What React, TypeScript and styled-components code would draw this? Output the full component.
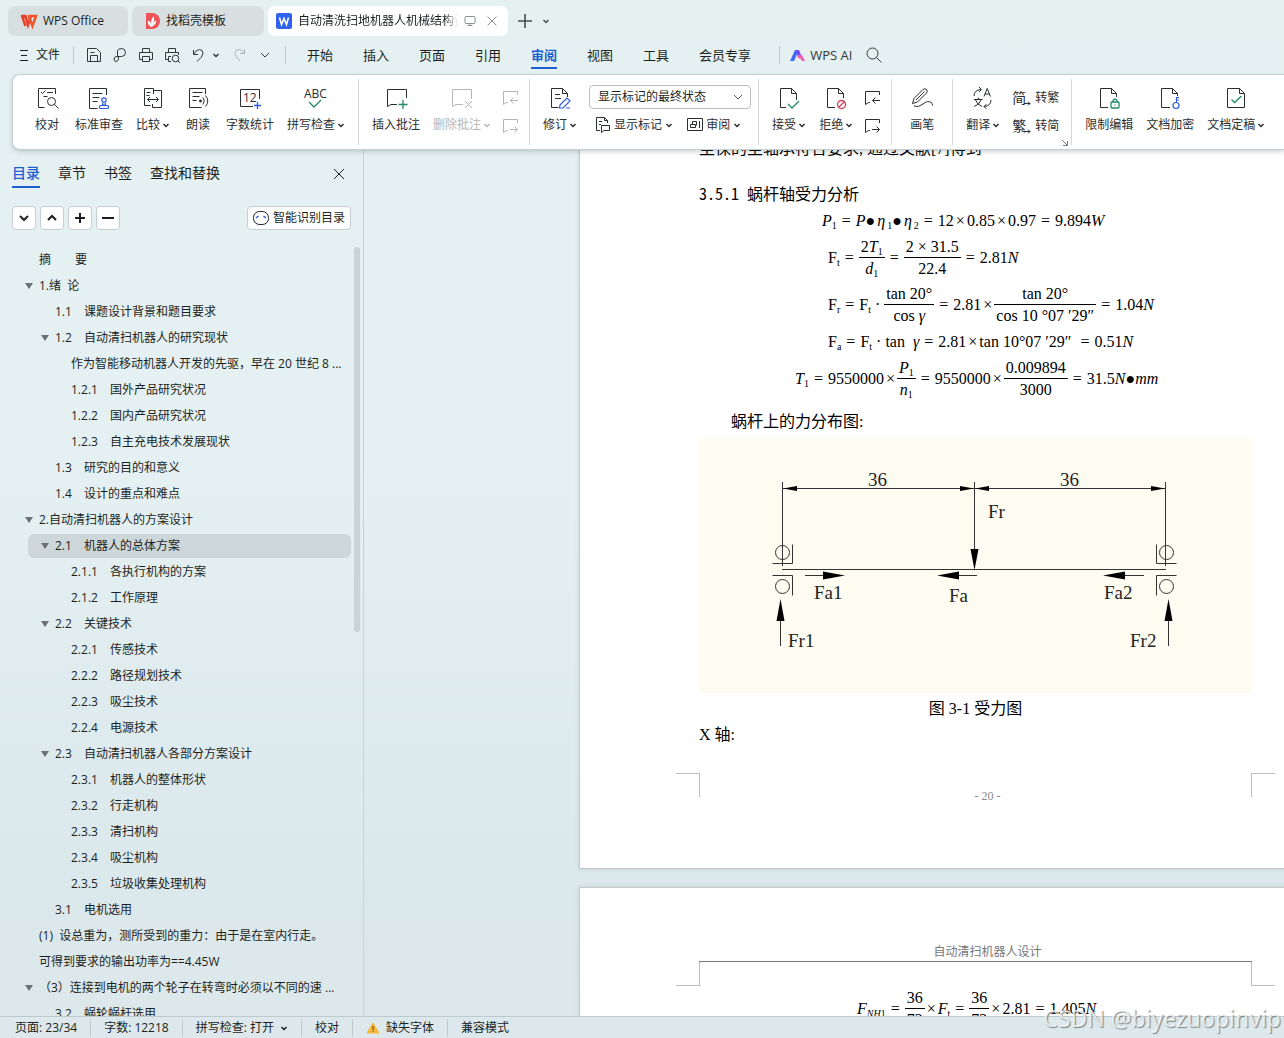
import React from "react";
import styled, { createGlobalStyle, css } from "styled-components";

const UI = '"Open Sans", "Noto Sans CJK SC", sans-serif';
const SERIF = '"Liberation Serif", "Noto Sans CJK SC", serif';
const INK = "#2b2e30";
const BLUE = "#1b5fd0";
const GREEN = "#1f8a63";
const LINE = "#c3cfd1";

const Global = createGlobalStyle`
  *, *::before, *::after { box-sizing: border-box; }
  body { margin: 0; overflow: hidden; }
  button, select { font: inherit; color: inherit; }
`;

const Shell = styled.div`
  position: relative;
  display: flex;
  flex-direction: column;
  height: 100vh;
  overflow: hidden;
  background: linear-gradient(180deg, #e5f0f1 0%, #e4f0f1 45%, #dbe8ec 85%, #dde8ea 100%);
  color: #1c1f21;
  font-family: ${UI};
  font-size: 12px;
  line-height: 18px;
`;

const PlainButton = styled.button`
  display: inline-flex;
  align-items: center;
  justify-content: center;
  padding: 0;
  border: 0;
  background: none;
  white-space: nowrap;
`;

const Glyph = styled.svg`
  display: block;
  flex: none;
  fill: none;
  stroke: currentColor;
  overflow: visible;
`;

type IconProps = { w?: number; h?: number; children: React.ReactNode; sw?: number };
const Icon = ({ w = 16, h = 16, sw = 1, children }: IconProps) => (
  <Glyph width={w} height={h} viewBox={`0 0 ${w} ${h}`} strokeWidth={sw} aria-hidden="true">
    {children}
  </Glyph>
);

const Caret = ({ bold = true }: { bold?: boolean }) => (
  <Icon w={8} h={8} sw={bold ? 1.5 : 1}>
    <path d="M1.5 3l2.5 2.5L6.5 3" />
  </Icon>
);

/* Window tabs */

const TabBar = styled.nav`
  display: flex;
  align-items: center;
  gap: 4px;
  padding: 6px 8px 0;
`;

const WindowTab = styled(PlainButton)<{ $w: number; $active?: boolean }>`
  justify-content: flex-start;
  gap: 6px;
  width: ${(p) => p.$w}px;
  height: 30px;
  padding: 0 12px;
  border-radius: 7px;
  background: ${(p) => (p.$active ? "#fff" : "#d7dfe1")};
  ${(p) => p.$active && css`padding: 0 10px 0 8px;`}
`;

const FadedTitle = styled.span`
  flex: 1;
  min-width: 0;
  overflow: hidden;
  text-align: left;
  mask-image: linear-gradient(90deg, #000 92%, transparent 100%);
`;

const TabTools = styled.span`
  display: flex;
  align-items: center;
  gap: 10px;
  color: #8b8f91;
`;

const NewTab = styled(PlainButton)`
  height: 30px;
  margin-left: 5px;
  color: #4a4d4f;
`;

/* Menu */

const MenuRow = styled.div`
  display: flex;
  align-items: center;
  height: 38px;
  flex: none;
  padding-left: 18px;
  color: #34383a;
`;

const FileButton = styled(PlainButton)`
  gap: 7px;
  width: 43px;
  color: #1c1f21;
`;

const Rule = styled.span<{ $gap?: number }>`
  width: 1px;
  height: 18px;
  margin: 0 ${(p) => p.$gap ?? 12}px;
  background: #bfcbcd;
`;

const QuickTools = styled.div`
  display: flex;
  align-items: center;
  gap: 10px;
`;

const UndoPair = styled.span`
  display: flex;
  align-items: center;
  gap: 8px;
  padding: 0 2px;
`;

const MenuTabs = styled.div`
  display: flex;
  gap: 30px;
  margin: 0 18px 0 8px;
  font-size: 13px;
`;

const MenuTab = styled(PlainButton)<{ $active?: boolean }>`
  height: 28px;
  padding-top: 2px;
  border-bottom: 2px solid ${(p) => (p.$active ? BLUE : "transparent")};
  color: ${(p) => (p.$active ? BLUE : "#1c1f21")};
  font-weight: ${(p) => (p.$active ? 700 : 400)};
`;

const AiButton = styled(PlainButton)`
  gap: 5px;
  margin-right: 14px;
  font-size: 13px;
`;

/* Ribbon */

const Ribbon = styled.div`
  position: relative;
  z-index: 2;
  display: flex;
  flex: none;
  margin-left: 12px;
  padding: 4px 0 4px 6px;
  border: 1px solid ${LINE};
  border-right: 0;
  border-radius: 8px 0 0 8px;
  background: #fff;
  box-shadow: 0 2px 4px rgba(70, 90, 95, 0.25);
`;

const Group = styled.div`
  position: relative;
  display: flex;
  gap: 1px;
  height: 66px;
  padding: 4px 7px 0;
  border-right: 1px solid #d3d7d8;
  &:last-child { border-right: 0; }
`;

const Tool = styled(PlainButton)<{ $off?: boolean; $min?: number }>`
  flex-direction: column;
  justify-content: flex-start;
  gap: 6px;
  height: 56px;
  min-width: ${(p) => p.$min ?? 42}px;
  padding: 3px 6px 0;
  color: ${(p) => (p.$off ? "#b3b5b6" : INK)};
`;

const ToolLabel = styled.span`
  display: flex;
  align-items: center;
  gap: 2px;
`;

const Stack = styled.div<{ $w: number; $pad?: number; $off?: boolean }>`
  display: flex;
  flex-direction: column;
  align-items: ${(p) => (p.$pad ? "stretch" : "center")};
  gap: 3px;
  width: ${(p) => p.$w + (p.$pad ?? 0)}px;
  padding: 2px 0 0 ${(p) => p.$pad ?? 0}px;
  color: ${(p) => (p.$off ? "#b3b5b6" : INK)};
`;

const SmallButton = styled(PlainButton)`
  justify-content: flex-start;
  gap: 3px;
  height: 25px;
`;

const SmallRow = styled.div`
  display: flex;
  gap: 14px;
  padding-left: 7px;
`;

const SelectBox = styled.label`
  display: grid;
  grid-template-columns: 1fr 24px;
  align-items: center;
  height: 24px;
  border: 1px solid #b9bdbf;
  border-radius: 4px;
  color: #55595b;
`;

const Select = styled.select`
  grid-area: 1 / 1 / 2 / 3;
  height: 22px;
  padding: 0 8px;
  border: 0;
  appearance: none;
  background: none;
  color: #1c1f21;
`;

const SelectArrow = styled.span`
  grid-area: 1 / 2;
  display: grid;
  place-items: center;
  pointer-events: none;
`;

const GlyphText = styled.span`
  display: flex;
  align-items: flex-end;
  font-size: 14px;
  font-weight: 400;
`;

const CornerMark = styled.span`
  position: absolute;
  right: 3px;
  bottom: -1px;
  color: #777;
`;

const icons = {
  proof: (
    <Icon w={24} h={24}>
      <path d="M20.500 8V2.500h-17v19h6M6 6l1.500 1.500 3-3M12 6.500h6M8.500 10.500h4" />
      <circle cx="16.500" cy="15.500" r="4" /><path d="M19.500 18.500l4 4" />
    </Icon>
  ),
  standard: (
    <Icon w={24} h={24}>
      <path d="M19.500 9V2.500h-17v20h8M5.500 7.500h10M5.500 11.500h7M5.500 15.500h5" />
      <g stroke="#2d5be0" strokeWidth="1.200"><circle cx="17" cy="14" r="2.200" /><path d="M16 16.500l-.5 2.500h3l-.5-2.500" /><rect x="12.500" y="19.500" width="9" height="3" rx="1" /></g>
    </Icon>
  ),
  compare: (
    <Icon w={24} h={24}>
      <path d="M12.500 8V2.500h-9v17h6M13 4.500h7.500v17h-9V18M5.500 6.500h4M5.500 9.500h3M6.500 13.500h11M9 11l-2.500 2.500L9 16M15 11l2.500 2.500L15 16" />
    </Icon>
  ),
  read: (
    <Icon w={24} h={24}>
      <path d="M19.500 8V2.500h-16v19h12M6.500 6.500h10M6.500 10.500h7M6.500 14.500h4M17 11.500q2.500 3.500 0 7M19.500 9.500q4.500 5.500 0 11" />
      <circle cx="14.500" cy="15" r="1" fill="currentColor" />
    </Icon>
  ),
  count: (
    <Icon w={24} h={24}>
      <path d="M21.500 13V3.500h-19v17H15" />
      <text x="5" y="16" fontSize="12" stroke="none" fill="currentColor" fontFamily="Open Sans">12</text>
      <path d="M19.500 16v7M16 19.500h7" stroke="#2d5be0" strokeWidth="1.300" />
    </Icon>
  ),
  spell: (
    <Icon w={24} h={24}>
      <text x="0" y="12" fontSize="12" stroke="none" fill="currentColor" fontFamily="Open Sans">ABC</text>
      <path d="M5 16l5 5 7-7" stroke={GREEN} strokeWidth="1.300" />
    </Icon>
  ),
  note: (
    <Icon w={24} h={24}>
      <path d="M22.500 12V3.500h-19v17l3.500-2h6" /><path d="M19 14v9M14.500 18.500h9" stroke={GREEN} strokeWidth="1.300" />
    </Icon>
  ),
  noteDel: (
    <Icon w={24} h={24}>
      <path d="M21.500 13V3.500h-19v17l3.500-2h7M15 15l7 7M22 15l-7 7" />
    </Icon>
  ),
  revise: (
    <Icon w={24} h={24}>
      <path d="M19.500 11V7.500l-5-5h-11v19h7M14.500 2.500v5h5M7 8.500h5M7 12.500h6" />
      <path d="M12 19l7-7 3 3-7 7h-3.500zM18 22h4" stroke="#2d5be0" strokeWidth="1.200" />
    </Icon>
  ),
  accept: (
    <Icon w={24} h={24}>
      <path d="M9 21.500H3.500v-19h11l5 5V14M14.500 2.500v5h5" /><path d="M11 18l4 4 7-7" stroke={GREEN} strokeWidth="1.300" />
    </Icon>
  ),
  reject: (
    <Icon w={24} h={24}>
      <path d="M11 21.500H3.500v-19h11l5 5V12M14.500 2.500v5h5" />
      <g stroke="#d03a5a" strokeWidth="1.300"><circle cx="17.500" cy="18.500" r="4" /><path d="M14.500 21.500l6-6" /></g>
    </Icon>
  ),
  pen: (
    <Icon w={24} h={24}>
      <path d="M2.500 17.500l1.500-5L13 3.500q2-1.500 3.500 0t0 3.500L7.500 16zM6 14l8.500-8.500M4 20q4 2 9-2t8-1.500q1.500.5 1.500 3" />
    </Icon>
  ),
  translate: (
    <Icon w={24} h={24}>
      <path d="M3 10q0-6 7-6.500M8 1l2.500 2.500L8 6M20 14q0 6-7 6.500M15.500 18L13 20.500l2.500 2.500M13 10.500l3.200-8 3.200 8M14 8h4.500M3 13.500h8.500M7.200 11.500v2M4.500 14q2 5 6.500 6.500M10 14q-1.500 5-7 6.500" />
    </Icon>
  ),
  lock: (
    <Icon w={24} h={24}>
      <path d="M11 21.500H3.500v-19h11l5 5V11M14.500 2.500v5h5" />
      <g stroke={GREEN} strokeWidth="1.300"><rect x="14" y="16" width="8" height="6" rx="1" /><path d="M16 16v-1.500q2-3 4 0V16M18 18.500v1" /></g>
    </Icon>
  ),
  key: (
    <Icon w={24} h={24}>
      <path d="M12 21.500H3.500v-19h11l5 5V10M14.500 2.500v5h5" />
      <g stroke="#2d5be0" strokeWidth="1.200"><circle cx="18" cy="19.500" r="3" /><path d="M18.500 16.500v-5H21M18.500 14H21" /></g>
    </Icon>
  ),
  final: (
    <Icon w={24} h={24}>
      <path d="M3.500 2.500h12l5 5v14h-17zM15.500 2.500v5h5" /><path d="M7.500 13.500l3 3 7-6.500" stroke={GREEN} strokeWidth="1.300" />
    </Icon>
  ),
};

const PrevNote = () => (
  <Icon w={18} h={18}><path d="M16.500 6V2.500h-14v13l3-2H7M17 11.500H9.500M12.500 8.500l-3 3 3 3" /></Icon>
);
const NextNote = () => (
  <Icon w={18} h={18}><path d="M16.500 6V2.500h-14v13l3-2H7M9 12.500h7.500M13.500 9.500l3 3-3 3" /></Icon>
);
const Turn = () => (
  <Icon w={6} h={8}><path d="M-2 4.500h6M2 2.500l2 2-2 2" /></Icon>
);

type ToolProps = { icon: React.ReactNode; label: string; arrow?: boolean; off?: boolean; min?: number };
const BigTool = ({ icon, label, arrow, off, min }: ToolProps) => (
  <Tool $off={off} $min={min} disabled={off}>
    {icon}
    <ToolLabel>{label}{arrow && <Caret />}</ToolLabel>
  </Tool>
);

/* Body */

const Body = styled.div`
  display: flex;
  flex: 1;
  min-height: 0;
`;

const Sidebar = styled.aside`
  display: flex;
  flex: 0 0 364px;
  flex-direction: column;
  min-height: 0;
  border-right: 1px solid #cdd2d4;
`;

const SideTabs = styled.div`
  display: flex;
  gap: 18px;
  padding: 10px 18px 0 12px;
  font-size: 14px;
  & > :last-child { margin-left: auto; }
`;

const SideTab = styled(PlainButton)<{ $active?: boolean }>`
  height: 28px;
  border-bottom: 2px solid ${(p) => (p.$active ? BLUE : "transparent")};
  color: ${(p) => (p.$active ? BLUE : "#1c1f21")};
  font-weight: ${(p) => (p.$active ? 500 : 400)};
`;

const SideTools = styled.div`
  display: flex;
  gap: 4px;
  padding: 18px 12px 16px;
  & > :last-child { margin-left: auto; }
`;

const Chip = styled(PlainButton)<{ $wide?: boolean }>`
  gap: 4px;
  width: ${(p) => (p.$wide ? 104 : 24)}px;
  height: 24px;
  border: 1px solid #c5ced0;
  border-radius: 4px;
  background: #fff;
`;

const OutlineArea = styled.div`
  display: flex;
  flex: 1;
  min-height: 0;
  overflow: hidden;
  padding-right: 3px;
`;

const Outline = styled.ul`
  flex: 1;
  min-width: 0;
  margin: 0;
  padding: 2px 3px 0 28px;
  list-style: none;
`;

const OutlineRow = styled.li<{ $level: number; $active?: boolean }>`
  display: flex;
  align-items: center;
  height: 24px;
  margin-bottom: 2px;
  padding-left: ${(p) => p.$level * 16}px;
  border-radius: 6px;
  background: ${(p) => (p.$active ? "#cdd6d8" : "transparent")};
  white-space: pre;
`;

const Twist = styled.span`
  flex: 0 0 14px;
  margin-left: -3px;
  svg { fill: #6c7173; stroke: none; }
`;

const Thumb = styled.div`
  width: 6px;
  height: 50%;
  margin-top: 1px;
  border-radius: 3px;
  background: #cad3d5;
`;

const outline: [number, string, boolean?][] = [
  [0, "摘　　要"], [0, "1.绪  论", true], [1, "1.1　课题设计背景和题目要求"],
  [1, "1.2　自动清扫机器人的研究现状", true], [2, "作为智能移动机器人开发的先驱，早在 20 世纪 8 ..."],
  [2, "1.2.1　国外产品研究状况"], [2, "1.2.2　国内产品研究状况"], [2, "1.2.3　自主充电技术发展现状"],
  [1, "1.3　研究的目的和意义"], [1, "1.4　设计的重点和难点"], [0, "2.自动清扫机器人的方案设计", true],
  [1, "2.1　机器人的总体方案", true], [2, "2.1.1　各执行机构的方案"], [2, "2.1.2　工作原理"],
  [1, "2.2　关键技术", true], [2, "2.2.1　传感技术"], [2, "2.2.2　路径规划技术"],
  [2, "2.2.3　吸尘技术"], [2, "2.2.4　电源技术"], [1, "2.3　自动清扫机器人各部分方案设计", true],
  [2, "2.3.1　机器人的整体形状"], [2, "2.3.2　行走机构"], [2, "2.3.3　清扫机构"],
  [2, "2.3.4　吸尘机构"], [2, "2.3.5　垃圾收集处理机构"], [1, "3.1　电机选用"],
  [0, "(1)  设总重为，测所受到的重力：由于是在室内行走。"], [0, "可得到要求的输出功率为==4.45W"],
  [0, "（3）连接到电机的两个轮子在转弯时必须以不同的速 ...", true], [1, "3.2　蜗轮蜗杆选用"],
];

/* Document */

const DocArea = styled.main`
  flex: 1;
  min-width: 0;
  overflow: hidden;
  padding-left: 215px;
`;

const Paper = styled.article<{ $first?: boolean }>`
  width: 793px;
  margin-top: ${(p) => (p.$first ? -15 : 18)}px;
  padding: ${(p) => (p.$first ? "0 119px 71px" : "55px 119px 71px")};
  border: 1px solid #c6cacb;
  background: #fff;
  box-shadow: 0 0 4px rgba(80, 100, 105, 0.2);
  color: #000;
  font-family: ${SERIF};
  font-size: 16px;
  line-height: 26px;
`;

const Para = styled.p<{ $indent?: boolean; $center?: boolean }>`
  margin: 0;
  padding-left: ${(p) => (p.$indent ? 32 : 0)}px;
  text-align: ${(p) => (p.$center ? "center" : "left")};
`;

const Heading = styled.h3`
  margin: 18px 0 0;
  font-family: "Noto Sans CJK SC", sans-serif;
  font-size: 16px;
  font-weight: 400;
  line-height: 26px;
  font-feature-settings: "hwid";
`;

const Equations = styled.div`
  display: flex;
  flex-direction: column;
  gap: 1px;
  padding: 2px 0 7px;
`;

const Eq = styled.div<{ $left: number; $tall?: boolean }>`
  display: flex;
  align-items: center;
  height: ${(p) => (p.$tall ? 46 : 26)}px;
  padding-left: ${(p) => p.$left}px;
  white-space: pre;
  sub {
    align-self: center;
    padding-top: 10px;
    font-size: 10px;
    line-height: 16px;
    vertical-align: baseline;
  }
`;

const Op = styled.span`
  margin: 0 5px;
`;

const Times = styled.span`
  margin: 0 2px;
`;

const Frac = styled.span`
  display: inline-flex;
  flex-direction: column;
  align-items: stretch;
  line-height: 22px;
  & > span {
    display: flex;
    align-items: center;
    justify-content: center;
    height: 22px;
    padding: 0 2px;
  }
  & > span:first-child { border-bottom: 1px solid #000; }
`;

const Figure = styled.figure`
  margin: 3px 0;
  background: #fefcf0;
  svg { display: block; width: 100%; height: auto; }
`;

const MarkRow = styled.div<{ $top?: boolean }>`
  display: flex;
  justify-content: space-between;
  margin: ${(p) => (p.$top ? "0 -23px" : "25px -23px 0")};
  color: #8a8a8a;
  font-size: 12px;
  line-height: 16px;
`;

const Mark = styled.span<{ $side: "left" | "right"; $top?: boolean }>`
  width: 24px;
  height: 24px;
  border: 0 solid #bdbdbd;
  ${(p) => (p.$top ? "border-bottom-width: 1px;" : "border-top-width: 1px;")}
  ${(p) => (p.$side === "left" ? "border-right-width: 1px;" : "border-left-width: 1px;")}
`;

const PageNo = styled.span`
  padding: 15px 0 0 24px;
  line-height: 16px;
  height: 24px;
`;

const PageHeader = styled.header`
  padding-left: 24px;
  border-bottom: 1px solid #777;
  color: #777;
  font-size: 12px;
  line-height: 18px;
  text-align: center;
`;

/* Status */

const StatusBar = styled.footer`
  display: flex;
  align-items: center;
  flex: none;
  height: 22px;
  padding-left: 15px;
  border-top: 1px solid #bccacd;
  background: #dce8eb;
`;

const StatusButton = styled(PlainButton)`
  gap: 6px;
`;

const Watermark = styled.div`
  position: absolute;
  right: 3px;
  bottom: 4px;
  z-index: 3;
  color: rgba(255, 255, 255, 0.75);
  font-family: "Noto Sans", sans-serif;
  font-size: 23px;
  line-height: 32px;
  text-shadow: 1px 1px 1px rgba(90, 100, 105, 0.75);
  pointer-events: none;
`;

const Bearings = ({ x, dir }: { x: number; dir: 1 | -1 }) => (
  <g stroke="#333" fill="none">
    <circle cx={x} cy="114.500" r="7" />
    <circle cx={x} cy="148.500" r="7" />
    <path d={`M${x - 10 * dir} 125.500h${20 * dir}v-19M${x - 10 * dir} 137.500h${20 * dir}v20`} />
  </g>
);

const ForceDiagram = () => (
  <svg viewBox="0 0 553 255" role="img" aria-label="受力图">
    <g stroke="#333" fill="none">
      <path d="M83.500 44v84M275.500 44v80M466.500 44v84M84 50.500h382M83 131.500h384M106 137.500h24M255 137.500h23M420 137.500h25M81.500 208v-30M469.500 208v-30" />
    </g>
    <g fill="#000">
      <path d="M84 50.500l14-2.500v5zM275 50.500l-14-2.500v5zM276 50.500l14-2.500v5zM466 50.500l-14-2.500v5z" />
      <path d="M275.500 132l-4-21h8zM146 137.500l-22-4v8zM238 137.500l22-4v8zM404 137.500l22-4v8zM81.500 161l-4 22h8zM469.500 161l-4 22h8z" />
    </g>
    <Bearings x={83.500} dir={1} />
    <Bearings x={467.500} dir={-1} />
    <g fill="#222" fontFamily="Liberation Serif" fontSize="19">
      <text x="169" y="48">36</text><text x="361" y="48">36</text>
      <text x="289" y="80">Fr</text><text x="115" y="161">Fa1</text>
      <text x="250" y="164">Fa</text><text x="405" y="161">Fa2</text>
      <text x="89" y="209">Fr1</text><text x="431" y="209">Fr2</text>
    </g>
  </svg>
);

const menu = ["开始", "插入", "页面", "引用", "审阅", "视图", "工具", "会员专享"];

export default function App() {
  return (
    <Shell>
      <Global />
      <TabBar>
        <WindowTab $w={120}>
          <Icon w={17} h={14} sw={2.5}>
            <path d="M1 2h4.500l2.500 9 3-9M5 2.500l-2.500 1 3 8.500" stroke="#e8402a" />
            <path d="M8 2h8l-3.500 10L9 3" stroke="#f0542b" />
          </Icon>
          WPS Office
        </WindowTab>
        <WindowTab $w={132}>
          <Icon w={16} h={16}>
            <path d="M2 0h6a8 8 0 010 16H2z" fill="#f0525a" stroke="none" />
            <path d="M7.500 14C3 12 4 9 4 7.500q3 1 3.500 4Q6 7 10 3q1 4-1 7 1-2 3.500-2.500-.5 4-5 6.500z" fill="#fff" stroke="none" />
          </Icon>
          找稻壳模板
        </WindowTab>
        <WindowTab $w={240} $active>
          <Icon w={16} h={16}>
            <rect width="16" height="16" rx="2" fill="#2f62f0" stroke="none" />
            <path d="M3.500 4.500l2 7 2.500-6 2.500 6 2-7" stroke="#fff" strokeWidth="1.600" />
          </Icon>
          <FadedTitle>自动清洗扫地机器人机械结构设计</FadedTitle>
          <TabTools>
            <Icon w={12} h={12}><path d="M1 2.500q0-1 1-1h8q1 0 1 1v5q0 1-1 1H2q-1 0-1-1zM6 8.500v2M3.500 10.500h5" /></Icon>
            <Icon w={12} h={12}><path d="M1.500 1.500l9 9M10.500 1.500l-9 9" /></Icon>
          </TabTools>
        </WindowTab>
        <NewTab aria-label="新建标签"><Icon w={16} h={16} sw={1.6}><path d="M8 1v14M1 8h14" /></Icon></NewTab>
        <NewTab aria-label="标签列表"><Caret /></NewTab>
      </TabBar>

      <MenuRow>
        <FileButton>
          <Icon w={10} h={12}><path d="M1 1.500h8M2 6.500h6M1 11.500h8" /></Icon>文件
        </FileButton>
        <Rule />
        <QuickTools>
          <PlainButton aria-label="保存"><Icon><path d="M1.500 1.500h9l4 4v9h-13zM4.500 14V8.500h7V14M4.500 5.500h4" /></Icon></PlainButton>
          <PlainButton aria-label="输出"><Icon><path d="M5.500 9V3.500q1-2 4-2 4 0 4 4t-4 4H5q-3 0-3 2.500t2 2.500 2.500-2.500V9.500" /></Icon></PlainButton>
          <PlainButton aria-label="打印"><Icon><path d="M4.500 5V1.500h7V5M4 12.500H1.500v-7h13v7H12M4.500 9.500h7v5h-7z" /></Icon></PlainButton>
          <PlainButton aria-label="打印预览"><Icon><path d="M4.500 5V1.500h7V5M4 12.500H1.500v-7h13V8M7 14.500H4.500v-5H7M14 14l2 2" /><circle cx="11.500" cy="11.500" r="3.300" /></Icon></PlainButton>
          <UndoPair>
            <PlainButton aria-label="撤销"><Icon w={12} h={16}><path d="M1.500 3v4.500H6M1.500 7.500Q4 2.500 7.500 2.500T11 6.500Q10.500 10 5 14.500" /></Icon></PlainButton>
            <Caret />
          </UndoPair>
          <PlainButton aria-label="重做" disabled><Icon w={16} h={16}><path d="M12.500 2v4.500H8M12.500 6.500Q10 2.500 6.500 2.500T3 6.500Q3.500 10 8 14" stroke="#aab5b7" /></Icon></PlainButton>
          <PlainButton aria-label="更多"><Icon w={14} h={12}><path d="M3 4l4 4 4-4" /></Icon></PlainButton>
        </QuickTools>
        <Rule $gap={13} />
        <MenuTabs>
          {menu.map((m) => <MenuTab key={m} $active={m === "审阅"}>{m}</MenuTab>)}
        </MenuTabs>
        <Rule $gap={10} />
        <AiButton>
          <Icon w={15} h={12}>
            <path d="M0 12L5 1h4L4 12z" fill="#3f6bf8" stroke="none" />
            <path d="M6 1h3l2 5-3 3z" fill="#7a45f5" stroke="none" />
            <path d="M8 6h4l3 6h-3q-1-3-4-3z" fill="#f05fb0" stroke="none" />
          </Icon>
          WPS AI
        </AiButton>
        <PlainButton aria-label="搜索"><Icon><circle cx="6.500" cy="6.500" r="5.500" /><path d="M10.500 10.500l5 5" /></Icon></PlainButton>
      </MenuRow>

      <Ribbon>
        <Group>
          <BigTool icon={icons.proof} label="校对" />
          <BigTool icon={icons.standard} label="标准审查" />
          <BigTool icon={icons.compare} label="比较" arrow />
          <BigTool icon={icons.read} label="朗读" />
          <BigTool icon={icons.count} label="字数统计" />
          <BigTool icon={icons.spell} label="拼写检查" arrow />
        </Group>
        <Group>
          <BigTool icon={icons.note} label="插入批注" />
          <BigTool icon={icons.noteDel} label="删除批注" arrow off />
          <Stack $w={24} $off>
            <SmallButton aria-label="上一条批注" disabled><PrevNote /></SmallButton>
            <SmallButton aria-label="下一条批注" disabled><NextNote /></SmallButton>
          </Stack>
        </Group>
        <Group>
          <BigTool icon={icons.revise} label="修订" arrow />
          <Stack $w={162} $pad={5}>
            <SelectBox>
              <Select aria-label="标记显示状态"><option>显示标记的最终状态</option></Select>
              <SelectArrow><Icon w={10} h={8}><path d="M1 2l4 4 4-4" /></Icon></SelectArrow>
            </SelectBox>
            <SmallRow>
              <SmallButton>
                <Icon w={15} h={16}><path d="M4 13.500H.5V.5h8l3 3V6M8.500.5v3h3M3 4.500h3M3 7.500h2M5.500 15.500v-7h8v5H8z" /></Icon>
                显示标记<Caret />
              </SmallButton>
              <SmallButton>
                <Icon w={16} h={16}><path d="M.5 1.500h15v12H.5zM12.500 4v7M3.500 10.500v-3h5v3zM5.500 7.500v-3h4v4" /></Icon>
                审阅<Caret />
              </SmallButton>
            </SmallRow>
          </Stack>
        </Group>
        <Group>
          <BigTool icon={icons.accept} label="接受" arrow />
          <BigTool icon={icons.reject} label="拒绝" arrow />
          <Stack $w={24}>
            <SmallButton aria-label="上一条修订"><PrevNote /></SmallButton>
            <SmallButton aria-label="下一条修订"><NextNote /></SmallButton>
          </Stack>
        </Group>
        <Group><BigTool icon={icons.pen} label="画笔" min={46} /></Group>
        <Group>
          <BigTool icon={icons.translate} label="翻译" arrow />
          <Stack $w={52} $pad={5}>
            <SmallButton><GlyphText>简<Turn /></GlyphText>转繁</SmallButton>
            <SmallButton><GlyphText>繁<Turn /></GlyphText>转简</SmallButton>
          </Stack>
          <CornerMark><Icon w={6} h={6}><path d="M0 0l5 5M5.500 1v4.500H1" /></Icon></CornerMark>
        </Group>
        <Group>
          <BigTool icon={icons.lock} label="限制编辑" />
          <BigTool icon={icons.key} label="文档加密" />
          <BigTool icon={icons.final} label="文档定稿" arrow />
        </Group>
      </Ribbon>

      <Body>
        <Sidebar>
          <SideTabs>
            <SideTab $active>目录</SideTab>
            <SideTab>章节</SideTab>
            <SideTab>书签</SideTab>
            <SideTab>查找和替换</SideTab>
            <PlainButton aria-label="关闭"><Icon w={12} h={12}><path d="M1 1l10 10M11 1L1 11" /></Icon></PlainButton>
          </SideTabs>
          <SideTools>
            <Chip aria-label="展开"><Icon w={10} h={10} sw={2}><path d="M1 3l4 4 4-4" /></Icon></Chip>
            <Chip aria-label="折叠"><Icon w={10} h={10} sw={2}><path d="M1 7l4-4 4 4" /></Icon></Chip>
            <Chip aria-label="增加级别"><Icon w={10} h={10} sw={2}><path d="M5 0v10M0 5h10" /></Icon></Chip>
            <Chip aria-label="减少级别"><Icon w={12} h={10} sw={2}><path d="M0 5h12" /></Icon></Chip>
            <Chip $wide>
              <Icon w={16} h={14}><rect x=".5" y=".5" width="15" height="13" rx="6" /><path d="M3 7l2.500-2M13 7l-2.500-2" stroke="#2d5be0" strokeWidth="1.500" /></Icon>
              智能识别目录
            </Chip>
          </SideTools>
          <OutlineArea>
            <Outline>
              {outline.map(([level, text, open], i) => (
                <OutlineRow key={i} $level={level} $active={i === 11}>
                  <Twist>{open && <Icon w={8} h={8}><path d="M0 1h8L4 7z" /></Icon>}</Twist>
                  {text}
                </OutlineRow>
              ))}
            </Outline>
            <Thumb />
          </OutlineArea>
        </Sidebar>

        <DocArea>
          <Paper $first>
            <Para>至保的至轴承符合要求, 通过文献[7]得到</Para>
            <Heading>3.5.1 蜗杆轴受力分析</Heading>
            <Equations>
              <Eq $left={123}>
                <i>P</i><sub>1</sub><Op>=</Op><i>P</i>●<Times><i>η</i></Times><sub>1</sub>●<Times><i>η</i></Times><sub>2</sub>
                <Op>=</Op>12<Times>×</Times>0.85<Times>×</Times>0.97<Op>=</Op>9.894<i>W</i>
              </Eq>
              <Eq $left={129} $tall>
                F<sub>t</sub>{" "}<Op>=</Op>
                <Frac><span>2<i>T</i><sub>1</sub></span><span><i>d</i><sub>1</sub></span></Frac>
                <Op>=</Op><Frac><span>2 × 31.5</span><span>22.4</span></Frac>
                <Op>=</Op>2.81<i>N</i>
              </Eq>
              <Eq $left={129} $tall>
                F<sub>r</sub>{" "}<Op>=</Op>F<sub>t</sub> · <Frac><span>tan 20°</span><span>cos <i>γ</i></span></Frac>
                <Op>=</Op>2.81<Times>×</Times><Frac><span>tan 20°</span><span>cos 10 °07 ′29″</span></Frac>
                <Op>=</Op>1.04<i>N</i>
              </Eq>
              <Eq $left={129}>
                F<sub>a</sub>{" "}<Op>=</Op>F<sub>t</sub> · tan <i> γ</i><Op>=</Op>2.81<Times>×</Times>tan 10°07 ′29″ <Op>=</Op>0.51<i>N</i>
              </Eq>
              <Eq $left={96} $tall>
                <i>T</i><sub>1</sub><Op>=</Op>9550000<Times>×</Times>
                <Frac><span><i>P</i><sub>1</sub></span><span><i>n</i><sub>1</sub></span></Frac>
                <Op>=</Op>9550000<Times>×</Times><Frac><span>0.009894</span><span>3000</span></Frac>
                <Op>=</Op>31.5<i>N</i>●<i>mm</i>
              </Eq>
            </Equations>
            <Para $indent>蜗杆上的力分布图:</Para>
            <Figure><ForceDiagram /></Figure>
            <Para $center>图 3-1 受力图</Para>
            <Para>X 轴:</Para>
            <MarkRow>
              <Mark $side="left" /><PageNo>- 20 -</PageNo><Mark $side="right" />
            </MarkRow>
          </Paper>
          <Paper>
            <PageHeader>自动清扫机器人设计</PageHeader>
            <MarkRow $top><Mark $side="left" $top /><Mark $side="right" $top /></MarkRow>
            <Eq $left={158} $tall>
              <i>F</i><sub><i>NH</i>1</sub><Op>=</Op><Frac><span>36</span><span>72</span></Frac><Times>×</Times>
              <i>F</i><sub>t</sub><Op>=</Op><Frac><span>36</span><span>72</span></Frac><Times>×</Times>2.81<Op>=</Op>1.405<i>N</i>
            </Eq>
          </Paper>
        </DocArea>
      </Body>

      <StatusBar>
        <span>页面: 23/34</span><Rule $gap={13} />
        <span>字数: 12218</span><Rule $gap={13} />
        <StatusButton>拼写检查: 打开<Caret /></StatusButton><Rule $gap={13} />
        <span>校对</span><Rule $gap={13} />
        <StatusButton>
          <Icon w={14} h={12}><path d="M7 1l6 10H1z" fill="#f6b73c" stroke="#f6b73c" strokeLinejoin="round" /><path d="M7 4v4M7 9v1" stroke="#5a3b00" /></Icon>
          缺失字体
        </StatusButton><Rule $gap={13} />
        <span>兼容模式</span>
      </StatusBar>
      <Watermark>CSDN @biyezuopinvip</Watermark>
    </Shell>
  );
}
